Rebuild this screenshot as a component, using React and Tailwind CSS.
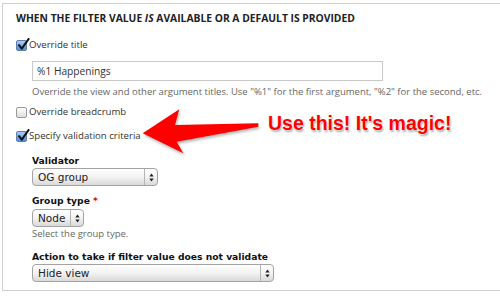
import React from "react";

const openSans = "font-['Open_Sans',sans-serif]";
const dejavu = "font-['DejaVu_Sans',sans-serif]";

const Checkbox = ({ checked }) =>
  checked ? (
    <span className="relative block w-[11px] h-[11px] rounded-[2px] border border-[#5b7fae] bg-linear-to-b from-[#a9cdf5] to-[#4c8fe0]">
      <svg
        className="absolute left-[0px] top-[-3px]"
        width="13"
        height="13"
        viewBox="0 0 13 13"
      >
        <path
          d="M2 7.2 L4.8 10.6 L11.6 1"
          fill="none"
          stroke="#111"
          strokeWidth="2.1"
          strokeLinecap="round"
          strokeLinejoin="round"
        />
      </svg>
    </span>
  ) : (
    <span className="block w-[11px] h-[11px] rounded-[2px] border border-[#9a9a9a] bg-linear-to-b from-white to-[#dedede]" />
  );

const CheckRow = ({ checked, children, className = "" }) => (
  <div className={`flex items-center h-[14px] ${className}`}>
    <Checkbox checked={checked} />
    <span className={`${openSans} text-[9.6px] text-[#333] ml-[2px] leading-none`}>
      {children}
    </span>
  </div>
);

const Select = ({ value, width, className = "" }) => (
  <div
    className={`flex h-[18px] rounded-[4px] border border-[#a3a3a3] bg-linear-to-b from-white via-[#f3f3f3] to-[#d9d9d9] ${width} ${className}`}
  >
    <div className={`flex-1 flex items-center pl-[5px] ${dejavu} text-[10.5px] text-[#222] leading-none`}>
      {value}
    </div>
    <div className="w-[13px] border-l border-[#b5b5b5] flex items-center justify-center">
      <svg width="5" height="9" viewBox="0 0 5 9">
        <path d="M2.5 0.5 L4.7 3.6 L0.3 3.6 Z" fill="#222" />
        <path d="M2.5 8.5 L4.7 5.4 L0.3 5.4 Z" fill="#222" />
      </svg>
    </div>
  </div>
);

const Label = ({ children, className = "" }) => (
  <div className={`h-[12px] flex items-center ${dejavu} font-bold text-[9.2px] text-[#111] leading-none ${className}`}>
    {children}
  </div>
);

export default function App() {
  return (
    <div className="relative w-[500px] h-[305px] bg-white overflow-hidden pt-[3px] pl-[2px]">
      {/* fieldset panel */}
      <div className="w-[520px] border border-[#d0d0d0] pl-[13px] pt-[6px] pb-[8px]">
        <div className={`h-[16px] flex items-center ${openSans} font-bold text-[10.3px] text-[#222] uppercase leading-none`}>
          When the filter value&nbsp;<i>is</i>&nbsp;available or a default is provided
        </div>

        <CheckRow checked className="mt-[12px]">
          Override title
        </CheckRow>

        <div className="ml-[16px] mt-[9px] w-[351px] h-[20px] border border-[#c9c9c9] flex items-center pl-[4px]">
          <span className={`${openSans} text-[10.2px] text-[#333] leading-none`}>%1 Happenings</span>
        </div>
        <div className={`ml-[16px] mt-[5px] h-[12px] flex items-center ${openSans} text-[9.5px] text-[#666] leading-none whitespace-nowrap`}>
          Override the view and other argument titles. Use "%1" for the first argument, "%2" for the second, etc.
        </div>

        <CheckRow className="mt-[7px]">Override breadcrumb</CheckRow>
        <CheckRow checked className="mt-[10px]">
          Specify validation criteria
        </CheckRow>

        <div className="ml-[16px]">
          <Label className="mt-[12px]">Validator</Label>
          <Select value="OG group" width="w-[126px]" className="mt-[1px]" />

          <Label className="mt-[9px]">
            Group type&nbsp;<span className="text-[#e00]">*</span>
          </Label>
          <Select value="Node" width="w-[52px]" className="mt-[2px]" />
          <div className={`mt-[1px] h-[12px] flex items-center ${openSans} text-[9.5px] text-[#666] leading-none`}>
            Select the group type.
          </div>

          <Label className="mt-[11px]">Action to take if filter value does not validate</Label>
          <Select value="Hide view" width="w-[242px]" className="mt-[1px]" />
        </div>
      </div>

      {/* annotation arrow */}
      <svg
        className="absolute left-[140px] top-[105px] drop-shadow-[1px_2px_1.5px_rgba(0,0,0,0.3)]"
        width="125"
        height="55"
        viewBox="0 0 125 55"
      >
        <polygon
          points="2.7,28.3 39.3,4.3 35,20 118.3,18.3 118.3,21.7 36.7,36.7 43.3,48.3"
          fill="#ff0000"
        />
      </svg>
      <div className="absolute left-[268px] top-[113.5px] font-['Liberation_Sans',Arial,sans-serif] font-bold text-[19.5px] leading-none text-[#ff0000] whitespace-nowrap [text-shadow:0_0_2px_#fff,1px_2px_2px_rgba(0,0,0,0.35)]">
        Use this! It's magic!
      </div>
    </div>
  );
}
